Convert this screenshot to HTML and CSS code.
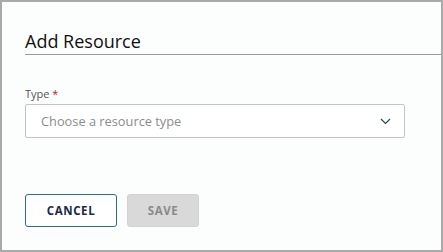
FILE: index.html
```html
<!DOCTYPE html>
<html>
<head>
<meta charset="utf-8">
<link rel="stylesheet" href="styles.css">
</head>
<body>
<div class="frame">
  <h1 class="title">Add Resource</h1>
  <div class="field">
    <label class="label">Type <span class="req">*</span></label>
    <div class="select">
      <span class="placeholder">Choose a resource type</span>
      <svg class="chev" width="11" height="7" viewBox="0 0 11 7"><path d="M1 1 L5.5 5.5 L10 1" fill="none" stroke="#1d4a5c" stroke-width="1.2"/></svg>
    </div>
  </div>
  <div class="actions">
    <button class="btn cancel">CANCEL</button>
    <button class="btn save">SAVE</button>
  </div>
</div>
</body>
</html>
```
FILE: styles.css
```css
html, body { margin: 0; padding: 0; }
body { font-family: "Open Sans", sans-serif; background: #fff; }
.frame {
  width: 443px; height: 252px; box-sizing: border-box;
  border: 2px solid #a9a9a9;
  background: #fcfdfd;
  padding: 27px 0 0 23px;
}
.title {
  margin: 0; font-size: 18px; font-weight: 400; color: #111;
  line-height: 24px; padding-bottom: 1px;
  border-bottom: 1px solid #9a9a9a;
}
.field { margin-top: 31px; width: 380px; }
.label { display: block; font-size: 11px; color: #555; line-height: 15px; }
.req { color: #c8102e; }
.select {
  margin-top: 3px; height: 34px; box-sizing: border-box;
  border: 1px solid #c4c4c4; border-radius: 2px; background: #fff;
  display: flex; align-items: center; justify-content: space-between;
  padding: 0 13px 0 15px;
}
.placeholder { font-size: 12.8px; color: #8c8c8c; }
.chev { display: block; }
.actions { margin-top: 56px; display: flex; gap: 10px; }
.btn {
  height: 33px; box-sizing: border-box; border-radius: 3px;
  font-family: "Open Sans", sans-serif; font-weight: 700; font-size: 11.5px;
  letter-spacing: 0.6px; padding: 0; cursor: pointer;
}
.cancel { width: 92px; background: #fff; border: 1px solid #2e6d7c; color: #1a2a48; }
.save { width: 72px; background: #d9d9d9; border: 1px solid #d2d2d2; color: #8a8a8a; }
```
